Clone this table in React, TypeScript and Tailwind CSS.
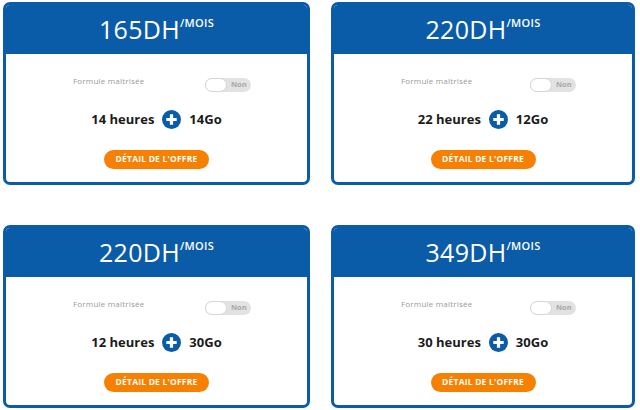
const offers = [
  { price: "165DH", hours: "14 heures", data: "14Go" },
  { price: "220DH", hours: "22 heures", data: "12Go" },
  { price: "220DH", hours: "12 heures", data: "30Go" },
  { price: "349DH", hours: "30 heures", data: "30Go" },
];

function PlusIcon() {
  return (
    <svg width="19" height="19" viewBox="0 0 20 20" className="shrink-0">
      <circle cx="10" cy="10" r="10" fill="#0a5ca8" />
      <path d="M10 4.5v11M4.5 10h11" stroke="#fff" strokeWidth="3.4" />
    </svg>
  );
}

function OfferCard({ price, hours, data }: { price: string; hours: string; data: string }) {
  return (
    <div className="h-[183px] rounded-[7px] border-[3px] border-[#0a5ca8] bg-white overflow-hidden flex flex-col">
      {/* header */}
      <div className="h-[49px] bg-[#0a5ca8] flex items-center justify-center text-white">
        <span className="text-[25px] leading-none font-normal tracking-[0.3px]">{price}</span>
        <span className="self-start mt-[12px] text-[11px] leading-none font-semibold tracking-[0.3px]">/MOIS</span>
      </div>

      <div className="flex-1 flex flex-col">
        <div className="flex justify-between items-start pl-[67px] pr-[56px] pt-[22px]">
          <span className="text-[8px] leading-none text-[#9a9a9a] mt-[1px] tracking-[0.2px]">Formule maîtrisée</span>
          {/* toggle */}
          <div className="mt-[2px] w-[46px] h-[14px] rounded-full bg-[#e2e2e2] flex items-center">
            <div className="w-[22px] h-[14px] rounded-full bg-white border border-[#d6d6d6] shrink-0" />
            <span className="ml-[4px] text-[7.5px] leading-none font-bold text-[#a8a8a8]">Non</span>
          </div>
        </div>

        <div className="flex items-center justify-center gap-[8px] mt-[18px] text-[13px] font-bold text-[#1b1b1b]">
          <span>{hours}</span>
          <PlusIcon />
          <span>{data}</span>
        </div>

        <div className="flex justify-center mt-[20px]">
          <button className="w-[105px] h-[19px] rounded-full bg-[#f78000] text-white text-[8.5px] font-bold leading-none tracking-[0.2px]">
            DÉTAIL DE L'OFFRE
          </button>
        </div>
      </div>
    </div>
  );
}

export default function App() {
  return (
    <div
      className="w-[640px] h-[410px] bg-white pt-[2px] pl-[3px]"
      style={{ fontFamily: '"Open Sans", "Liberation Sans", sans-serif' }}
    >
      <div className="grid grid-cols-[307px_304px] gap-x-[21px] gap-y-[40px]">
        {offers.map((o, i) => (
          <OfferCard key={i} {...o} />
        ))}
      </div>
    </div>
  );
}
